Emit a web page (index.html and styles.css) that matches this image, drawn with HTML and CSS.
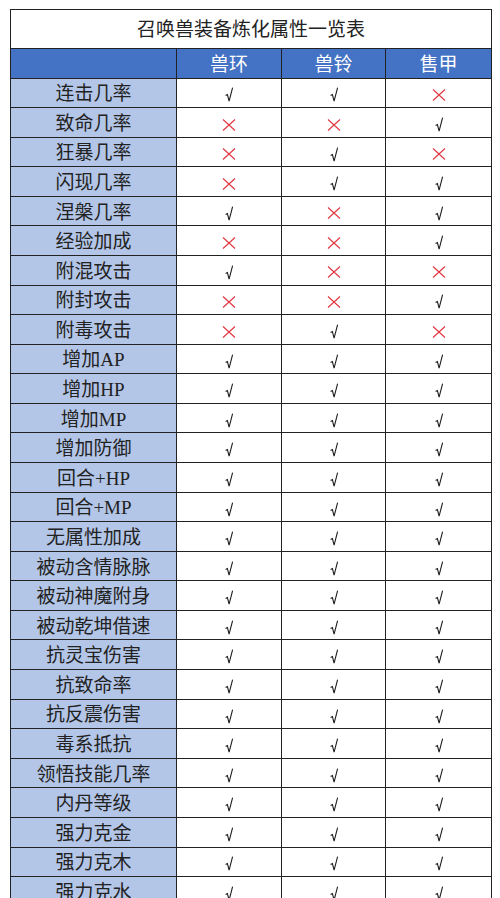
FILE: index.html
```html
<!DOCTYPE html>
<html lang="zh">
<head>
<meta charset="utf-8">
<title>召唤兽装备炼化属性一览表</title>
<link rel="stylesheet" href="styles.css">
</head>
<body>
<svg class="defs" aria-hidden="true">
  <symbol id="ck" viewBox="0 0 8 15"><path d="M0.6 8.6 L2.4 7.6 L4.1 14.2 L7.6 0.6" fill="none" stroke="#1c1c1c" stroke-width="1.1" stroke-linejoin="miter"/></symbol>
  <symbol id="x" viewBox="0 0 14 12"><path d="M1 0.5 L13 11.5 M13 0.5 L1 11.5" fill="none" stroke="#e2343f" stroke-width="1.1"/></symbol>
</svg>
<table class="sheet">
  <colgroup><col class="c-name"><col class="c-a"><col class="c-b"><col class="c-c"></colgroup>
  <thead>
    <tr class="title-row"><th colspan="4" class="title">召唤兽装备炼化属性一览表</th></tr>
    <tr class="head-row"><th class="corner"></th><th>兽环</th><th>兽铃</th><th>售甲</th></tr>
  </thead>
  <tbody id="rows"></tbody>
</table>
<script src="app.js"></script>
</body>
</html>
```

FILE: app.js
```js
var data = [
  ["连击几率",1,1,0],["致命几率",0,0,1],["狂暴几率",0,1,0],["闪现几率",0,1,1],
  ["涅槃几率",1,0,1],["经验加成",0,0,1],["附混攻击",1,0,0],["附封攻击",0,0,1],
  ["附毒攻击",0,1,0],["增加AP",1,1,1],["增加HP",1,1,1],["增加MP",1,1,1],
  ["增加防御",1,1,1],["回合+HP",1,1,1],["回合+MP",1,1,1],["无属性加成",1,1,1],
  ["被动含情脉脉",1,1,1],["被动神魔附身",1,1,1],["被动乾坤借速",1,1,1],["抗灵宝伤害",1,1,1],
  ["抗致命率",1,1,1],["抗反震伤害",1,1,1],["毒系抵抗",1,1,1],["领悟技能几率",1,1,1],
  ["内丹等级",1,1,1],["强力克金",1,1,1],["强力克木",1,1,1],["强力克水",1,1,1]
];
var tb = document.getElementById("rows");
var html = "";
data.forEach(function (r) {
  html += '<tr><th class="name">' + r[0] + '</th>';
  for (var i = 1; i < 4; i++) {
    html += r[i]
      ? '<td><svg class="ck"><use href="#ck"/></svg></td>'
      : '<td><svg class="x"><use href="#x"/></svg></td>';
  }
  html += '</tr>';
});
tb.innerHTML = html;
```

FILE: styles.css
```css
html, body {
  margin: 0;
  padding: 0;
  background: #ffffff;
}
body {
  padding: 9px 10px 0 10px;
  font-family: "Liberation Serif", "Noto Sans CJK SC", serif;
  color: #1e1e1e;
}
.defs {
  position: absolute;
  width: 0;
  height: 0;
  overflow: hidden;
}
.sheet {
  border-collapse: collapse;
  table-layout: fixed;
  width: 481px;
  border: 1.5px solid #222;
}
.c-name { width: 166px; }
.c-a { width: 105px; }
.c-b { width: 104px; }
.c-c { width: 106px; }
.sheet th, .sheet td {
  border: 1.5px solid #222;
  padding: 0;
  text-align: center;
  vertical-align: middle;
  font-weight: normal;
  font-size: 19px;
  line-height: 20px;
}
.sheet th {
  padding-top: 3px;
}
.title-row { height: 38.5px; }
.title {
  background: #ffffff;
  color: #222;
}
.head-row { height: 30px; }
.head-row th {
  background: #4472c4;
  color: #ffffff;
}
.sheet tbody tr { height: 29.58px; }
.name {
  background: #b4c6e7;
  color: #222;
}
.sheet td {
  background: #ffffff;
  padding-top: 1px;
}
.ck {
  width: 8px;
  height: 15px;
  display: inline-block;
  vertical-align: middle;
}
.x {
  width: 14px;
  height: 12px;
  display: inline-block;
  vertical-align: middle;
}
```
